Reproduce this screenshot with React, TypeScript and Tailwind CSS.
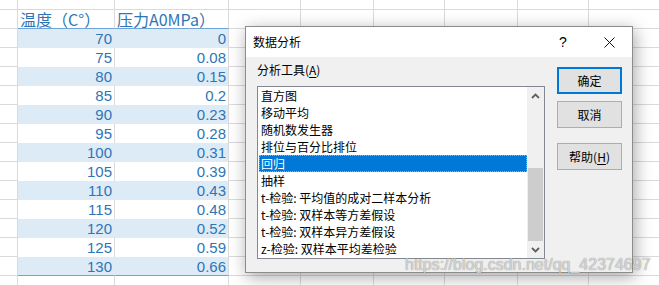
import React from 'react';

const COLW = ['w-[18px]', 'w-[97px]', 'w-[114px]', 'w-[72px]', 'w-[73px]', 'w-[71px]', 'w-[73px]', 'w-[71px]', 'w-[80px]'];

const DATA: [string, string][] = [
  ['70', '0'],
  ['75', '0.08'],
  ['80', '0.15'],
  ['85', '0.2'],
  ['90', '0.23'],
  ['95', '0.28'],
  ['100', '0.31'],
  ['105', '0.39'],
  ['110', '0.43'],
  ['115', '0.48'],
  ['120', '0.52'],
  ['125', '0.59'],
  ['130', '0.66'],
];

const ITEMS = [
  '直方图',
  '移动平均',
  '随机数发生器',
  '排位与百分比排位',
  '回归',
  '抽样',
  't-检验: 平均值的成对二样本分析',
  't-检验: 双样本等方差假设',
  't-检验: 双样本异方差假设',
  'z-检验: 双样本平均差检验',
];

const GRID = 'border-[#dadada]';

function GridCells({ from }: { from: number }) {
  return (
    <>
      {COLW.slice(from).map((w, i) => (
        <div key={i} className={`${w} shrink-0 border-r border-b ${GRID}`} />
      ))}
    </>
  );
}

function Chevron({ down }: { down?: boolean }) {
  return (
    <svg width="9" height="6" viewBox="0 0 9 6" className="block">
      <polyline
        points={down ? '1,1 4.5,4.5 8,1' : '1,5 4.5,1.5 8,5'}
        fill="none"
        stroke="#606060"
        strokeWidth="1.8"
      />
    </svg>
  );
}

export default function App() {
  return (
    <div className="relative w-[659px] h-[285px] overflow-hidden bg-white font-[family-name:'Liberation_Sans','Noto_Sans_CJK_SC',sans-serif]">
      {/* spreadsheet */}
      <div className="flex flex-col">
        <div className="flex h-[10px]">
          <GridCells from={0} />
        </div>
        <div className="flex h-[19px]">
          <div className={`w-[18px] shrink-0 border-r border-b ${GRID}`} />
          <div className="w-[97px] shrink-0 border-r border-r-[#dadada] border-b border-b-[#6fa3d8] pl-[2px] text-[16px] leading-[19px] text-[#2e75b6] font-[family-name:'Noto_Sans_CJK_SC',sans-serif] whitespace-nowrap">
            温度（C°）
          </div>
          <div className="w-[114px] shrink-0 border-r border-r-[#dadada] border-b border-b-[#6fa3d8] pl-[2px] text-[16px] leading-[19px] text-[#2e75b6] font-[family-name:'Noto_Sans_CJK_SC',sans-serif] whitespace-nowrap">
            压力A0MPa）
          </div>
          <GridCells from={3} />
        </div>
        {DATA.map(([a, b], i) => {
          const band = i % 2 === 0;
          const last = i === DATA.length - 1;
          const bg = band ? 'bg-[#ddebf7]' : 'bg-white';
          const bottom = last ? 'border-b border-b-[#6fa3d8]' : '';
          return (
            <div key={i} className="flex h-[19px]">
              <div className={`w-[18px] shrink-0 border-r border-b ${GRID}`} />
              <div
                className={`w-[97px] shrink-0 ${bg} ${bottom} border-r ${band ? 'border-r-[#ddebf7]' : 'border-r-[#dadada]'} pr-[2px] pt-[1px] text-right text-[15px] leading-[18px] text-[#2e75b6]`}
              >
                {a}
              </div>
              <div
                className={`w-[114px] shrink-0 ${bg} ${bottom} border-r border-r-[#dadada] pr-[2px] pt-[1px] text-right text-[15px] leading-[18px] text-[#2e75b6]`}
              >
                {b}
              </div>
              <GridCells from={3} />
            </div>
          );
        })}
        <div className="flex h-[10px]">
          <GridCells from={0} />
        </div>
      </div>

      {/* dialog */}
      <div className="absolute left-[245px] top-[26px] w-[388px] h-[247px] border border-[#8c8c8c] bg-[#f0f0f0] flex flex-col text-[12px] text-black shadow-[2px_4px_16px_rgba(0,0,0,0.35)] font-[family-name:'Noto_Sans_CJK_SC',sans-serif]">
        <div className="h-[30px] bg-white flex items-center shrink-0">
          <div className="pl-[7px] flex-1 leading-[16px]">数据分析</div>
          <div className="w-[46px] h-full flex items-center justify-center text-[14px] font-[family-name:'Liberation_Sans',sans-serif]">?</div>
          <div className="w-[46px] h-full flex items-center justify-center">
            <svg width="11" height="11" viewBox="0 0 11 11" className="block">
              <path d="M0.5 0.5 L10.5 10.5 M10.5 0.5 L0.5 10.5" stroke="#111" strokeWidth="1" fill="none" />
            </svg>
          </div>
        </div>
        <div className="flex flex-1 pl-[11px] pr-[10px] gap-[12px]">
          <div className="w-[288px] flex flex-col">
            <div className="mt-[5px] h-[16px] leading-[16px] mb-[8px]">
              分析工具(<span className="underline underline-offset-2">A</span>)
            </div>
            <div className="h-[173px] border border-[#828790] bg-white flex">
              <div className="flex-1 flex flex-col pl-[1px]">
                {ITEMS.map((t, i) => (
                  <div
                    key={i}
                    className={`h-[17px] leading-[17px] pl-[2px] whitespace-nowrap ${
                      i === 4 ? 'bg-[#0078d7] text-white outline-1 outline-dotted outline-[#f5a04a] -outline-offset-1' : ''
                    }`}
                  >
                    {t}
                  </div>
                ))}
              </div>
              <div className="w-[17px] bg-[#f0f0f0] flex flex-col">
                <div className="h-[17px] flex items-center justify-center">
                  <Chevron />
                </div>
                <div className="flex-1 flex flex-col justify-end">
                  <div className="h-[73px] ml-[1px] mr-[1px] bg-[#cdcdcd]" />
                </div>
                <div className="h-[17px] flex items-center justify-center">
                  <Chevron down />
                </div>
              </div>
            </div>
          </div>
          <div className="w-[65px] flex flex-col">
            <div className="mt-[10px] h-[27px] border-2 border-[#0078d7] bg-[#e1e1e1] flex items-center justify-center">确定</div>
            <div className="mt-[7px] h-[27px] border border-[#adadad] bg-[#e1e1e1] flex items-center justify-center">取消</div>
            <div className="mt-[15px] h-[27px] border border-[#adadad] bg-[#e1e1e1] flex items-center justify-center">
              帮助(<span className="underline underline-offset-2">H</span>)
            </div>
          </div>
        </div>
      </div>

      {/* watermark */}
      <div className="absolute left-[405px] top-[257px] text-[16px] leading-[16px] whitespace-nowrap text-[rgba(235,235,235,0.8)] [text-shadow:0_0_1px_rgba(0,0,0,0.55)] font-[family-name:'Liberation_Sans',sans-serif]">
        https://blog.csdn.net/qq_42374697
      </div>
    </div>
  );
}
